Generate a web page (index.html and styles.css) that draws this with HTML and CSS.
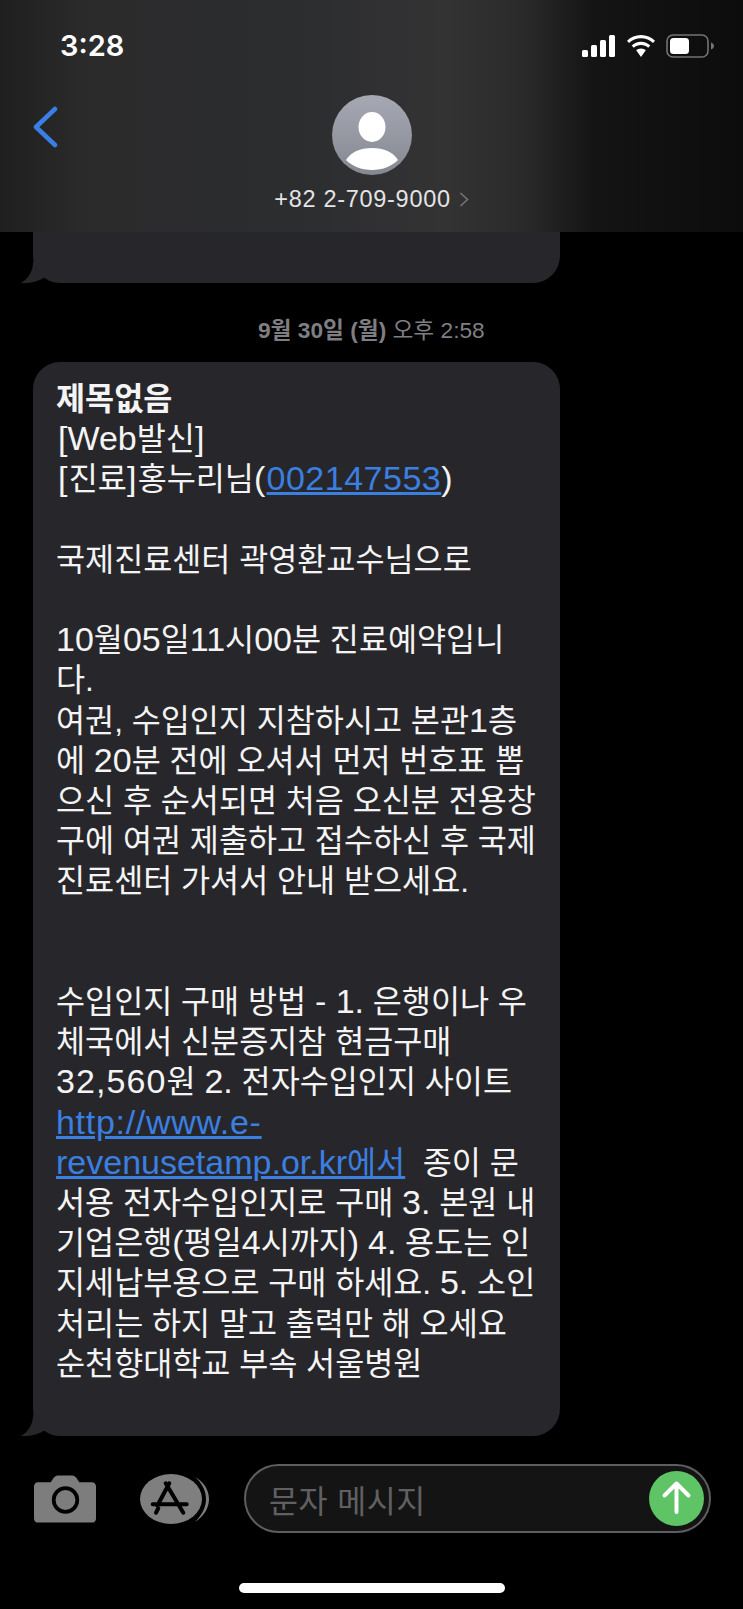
FILE: index.html
```html
<!DOCTYPE html>
<html lang="ko">
<head>
<meta charset="utf-8">
<title>문자 메시지</title>
<link rel="stylesheet" href="styles.css">
</head>
<body>
<div class="screen">
  <header class="header">
    <div class="status">
      <span class="time">3:28</span>
      <div class="status-icons">
        <svg class="signal" width="34" height="22" viewBox="0 0 34 22"><rect x="0" y="15" width="6" height="7" rx="1.5"/><rect x="9" y="10" width="6" height="12" rx="1.5"/><rect x="18" y="5" width="6" height="17" rx="1.5"/><rect x="27" y="0" width="6" height="22" rx="1.5"/></svg>
        <svg class="wifi" width="30" height="22" viewBox="0 0 30 22"><path d="M15 3.2c4.700 0 8.900 1.800 12 4.800l2-2.300C25.300 2.100 20.400 0 15 0S4.700 2.100 1 5.700L3 8c3.100-3 7.300-4.800 12-4.800z"/><path d="M15 10c2.800 0 5.300 1 7.200 2.800l2.100-2.300C21.800 8.200 18.600 6.800 15 6.800s-6.800 1.400-9.300 3.700l2.100 2.300C9.700 11 12.200 10 15 10z"/><path d="M15 13.500c-1.900 0-3.500.700-4.800 1.800L15 22l4.800-6.700c-1.300-1.100-2.900-1.800-4.800-1.800z"/></svg>
        <svg class="battery" width="49" height="24" viewBox="0 0 49 24"><rect x="1" y="1" width="41" height="22" rx="6" fill="none" stroke="#737373" stroke-width="1.600"/><rect x="4" y="4" width="19" height="16" rx="3.500" fill="#fff"/><path d="M45 8.500c1.800.6 3 2 3 3.500s-1.200 2.900-3 3.500z" fill="#737373"/></svg>
      </div>
    </div>
    <div class="nav">
      <svg class="back" width="26" height="42" viewBox="0 0 26 42"><path d="M23 3 4 21l19 18" fill="none" stroke="#3a7fe6" stroke-width="4.500" stroke-linecap="round" stroke-linejoin="round"/></svg>
      <div class="contact">
        <svg class="avatar" width="80" height="80" viewBox="0 0 80 80">
          <defs><linearGradient id="ag" x1="0" y1="0" x2="0" y2="1"><stop offset="0" stop-color="#a6a8b3"/><stop offset="1" stop-color="#858791"/></linearGradient></defs>
          <circle cx="40" cy="40" r="40" fill="url(#ag)"/>
          <ellipse cx="40" cy="32" rx="13.500" ry="15" fill="#fff"/>
          <path d="M14 65c5-8 14-12 26-12s21 4 26 12c-6 6-15 10-26 10s-20-4-26-10z" fill="#fff"/>
        </svg>
        <div class="phone">+82 2-709-9000<svg class="phone-chevron" width="10" height="15" viewBox="0 0 10 15"><path d="M1.500 1 8.500 7.500 1.500 14" fill="none" stroke="#77777b" stroke-width="1.500"/></svg></div>
      </div>
    </div>
  </header>

  <main class="thread">
    <div class="bubble bubble-cut">
      <svg class="tail" width="30" height="21" viewBox="0 0 30 21"><path d="M12 0C12 9 8 16 0 21 8 21.500 17 20 24 15L30 0z"/></svg>
    </div>
    <div class="date"><b>9월 30일 (월)</b> 오후 2:58</div>
    <div class="bubble bubble-full">
      <svg class="tail" width="30" height="21" viewBox="0 0 30 21"><path d="M12 0C12 9 8 16 0 21 8 21.500 17 20 24 15L30 0z"/></svg>
      <p class="msg"><b class="subject">제목없음</b><br><span class="lat open">[Web</span>발신<span class="lat">]</span><br><span class="lat open wide">[</span>진료<span class="lat wide">]</span>홍누리님<span class="lat wide">(</span><a class="link lat digits" href="#">002147553</a><span class="lat">)</span><br><br>국제진료센터 곽영환교수님으로<br><br><span class="lat">10</span>월<span class="lat">05</span>일<span class="lat">11</span>시<span class="lat">00</span>분 진료예약입니<br>다.<br>여권, 수입인지 지참하시고 본관<span class="lat">1</span>층<br>에 <span class="lat">20</span>분 전에 오셔서 먼저 번호표 뽑<br>으신 후 순서되면 처음 오신분 전용창<br>구에 여권 제출하고 접수하신 후 국제<br>진료센터 가셔서 안내 받으세요.<br><br><br>수입인지 구매 방법 <span class="lat">- 1.</span> 은행이나 우<br>체국에서 신분증지참 현금구매<br><span class="lat amount">32,560</span>원 <span class="lat">2.</span> 전자수입인지 사이트<br><a class="link lat url" href="#">http://www.e-</a><br><a class="link" href="#"><span class="lat">revenusetamp.or.kr</span>에서</a>&nbsp; 종이 문<br>서용 전자수입인지로 구매 <span class="lat">3.</span> 본원 내<br>기업은행<span class="lat">(</span>평일<span class="lat">4</span>시까지<span class="lat">)</span> <span class="lat">4.</span> 용도는 인<br>지세납부용으로 구매 하세요. <span class="lat">5.</span> 소인<br>처리는 하지 말고 출력만 해 오세요<br>순천향대학교 부속 서울병원</p>
    </div>
  </main>

  <footer class="composer">
    <svg class="camera" width="62" height="48" viewBox="0 0 63 48"><path fill-rule="evenodd" fill="#7d7d7d" d="M4 7h13l3-4.500C21 .9 22.500 0 24 0h15c1.500 0 3 .9 4 2.500L46 7h13c2.200 0 4 1.800 4 4v33c0 2.200-1.800 4-4 4H4c-2.200 0-4-1.800-4-4V11c0-2.200 1.800-4 4-4z"/><circle cx="32" cy="25" r="12" fill="none" stroke="#000" stroke-width="3.800"/></svg>
    <svg class="store" width="69" height="50" viewBox="0 0 69 50"><path d="M55 3C64 8 69 16 69 25S64 42 55 48C62 41 66 33 66 25S62 9 55 3z" fill="#7d7d7d"/><ellipse cx="31" cy="25" rx="31" ry="25" fill="#7f7f7f"/><path d="M29.300 9.300 17.300 31.700M25.700 9.300 43.300 38.700M12.700 30.300H46.700M16 38.700 18.300 34.300" fill="none" stroke="#000" stroke-width="4" stroke-linecap="round"/></svg>
    <div class="input">
      <span class="placeholder">문자 메시지</span>
      <svg class="send" width="55" height="55" viewBox="0 0 55 55"><circle cx="27.500" cy="27.500" r="27.500" fill="#5fc466"/><path d="M27.500 41V13M15.500 24.500l12-12 12 12" fill="none" stroke="#fff" stroke-width="4" stroke-linecap="round" stroke-linejoin="round"/></svg>
    </div>
  </footer>
  <div class="home-bar"></div>
</div>
</body>
</html>
```
FILE: styles.css
```css
* { box-sizing: border-box; }
html, body { margin: 0; padding: 0; background: #000; }
body { font-family: "Liberation Sans", "Noto Sans CJK KR", sans-serif; color: #fff; }
.screen { width: 743px; height: 1609px; display: flex; flex-direction: column; overflow: hidden; background: #000; }

.header { height: 232px; flex: none;
  background: linear-gradient(90deg, #1f1f20 0%, #2b2b2c 12%, #2c2d2f 40%, #333334 60%, #2b2b2b 70%, #141414 80%, #0c0c0c 100%); }
.status { height: 95px; display: flex; justify-content: space-between; align-items: flex-start; padding: 30px 28px 0 60px; }
.time { font-family: Inter, sans-serif; font-size: 29px; line-height: 32px; font-weight: 600; }
.status-icons { display: flex; align-items: center; gap: 10px; padding-top: 4px; }
.signal, .wifi { fill: #fff; }
.nav { position: relative; display: flex; justify-content: center; }
.back { position: absolute; left: 32px; top: 11px; }
.contact { display: flex; flex-direction: column; align-items: center; }
.avatar { display: block; }
.phone { margin-top: 11px; display: flex; align-items: center; gap: 8px; font-size: 23.5px; line-height: 26px; color: #e4e4e6; letter-spacing: 0.7px; }

.thread { flex: none; display: flex; flex-direction: column; align-items: flex-start; padding-left: 33px; }
.bubble { position: relative; width: 527px; background: #27272b; border-radius: 27px; }
.bubble-cut { height: 51px; border-radius: 0 0 27px 27px; }
.bubble-full { height: 1074px; padding: 17px 0 0 23px; }
.tail { position: absolute; left: -12px; bottom: 0; fill: #27272b; }
.date { width: 100%; margin: 34px 0 18px; padding-left: 225px; font-size: 22.7px; line-height: 27px; color: #7f7f83; white-space: nowrap; }
.date b { font-weight: 700; }
.msg { margin: 0; font-size: 31.6px; line-height: 40.2px; white-space: nowrap; color: #f4f4f4; }
.lat { font-size: 34px; line-height: 0; }
.open { margin-left: 2px; }
.wide { letter-spacing: 1.3px; }
.digits { letter-spacing: 0.5px; }
.amount { letter-spacing: 1.1px; }
.url { letter-spacing: 0.7px; }
.subject { font-weight: 700; }
.link { color: #3b7fe0; text-decoration: underline; }

.composer { flex: none; display: flex; align-items: center; margin-top: 28px; height: 69px; padding-left: 34px; }
.camera { display: block; margin-top: 1px; }
.store { display: block; margin-left: 44px; }
.input { margin-left: 35px; width: 467px; height: 69px; display: flex; align-items: center; justify-content: space-between; padding: 0 5px 0 23px; background: #141414; border: 2px solid #5e5e60; border-radius: 35px; }
.placeholder { font-size: 31.5px; color: #606063; letter-spacing: 0.5px; }
.send { display: block; }
.home-bar { flex: none; width: 266px; height: 10px; margin: 50px 0 0 239px; background: #fff; border-radius: 5px; }
```
